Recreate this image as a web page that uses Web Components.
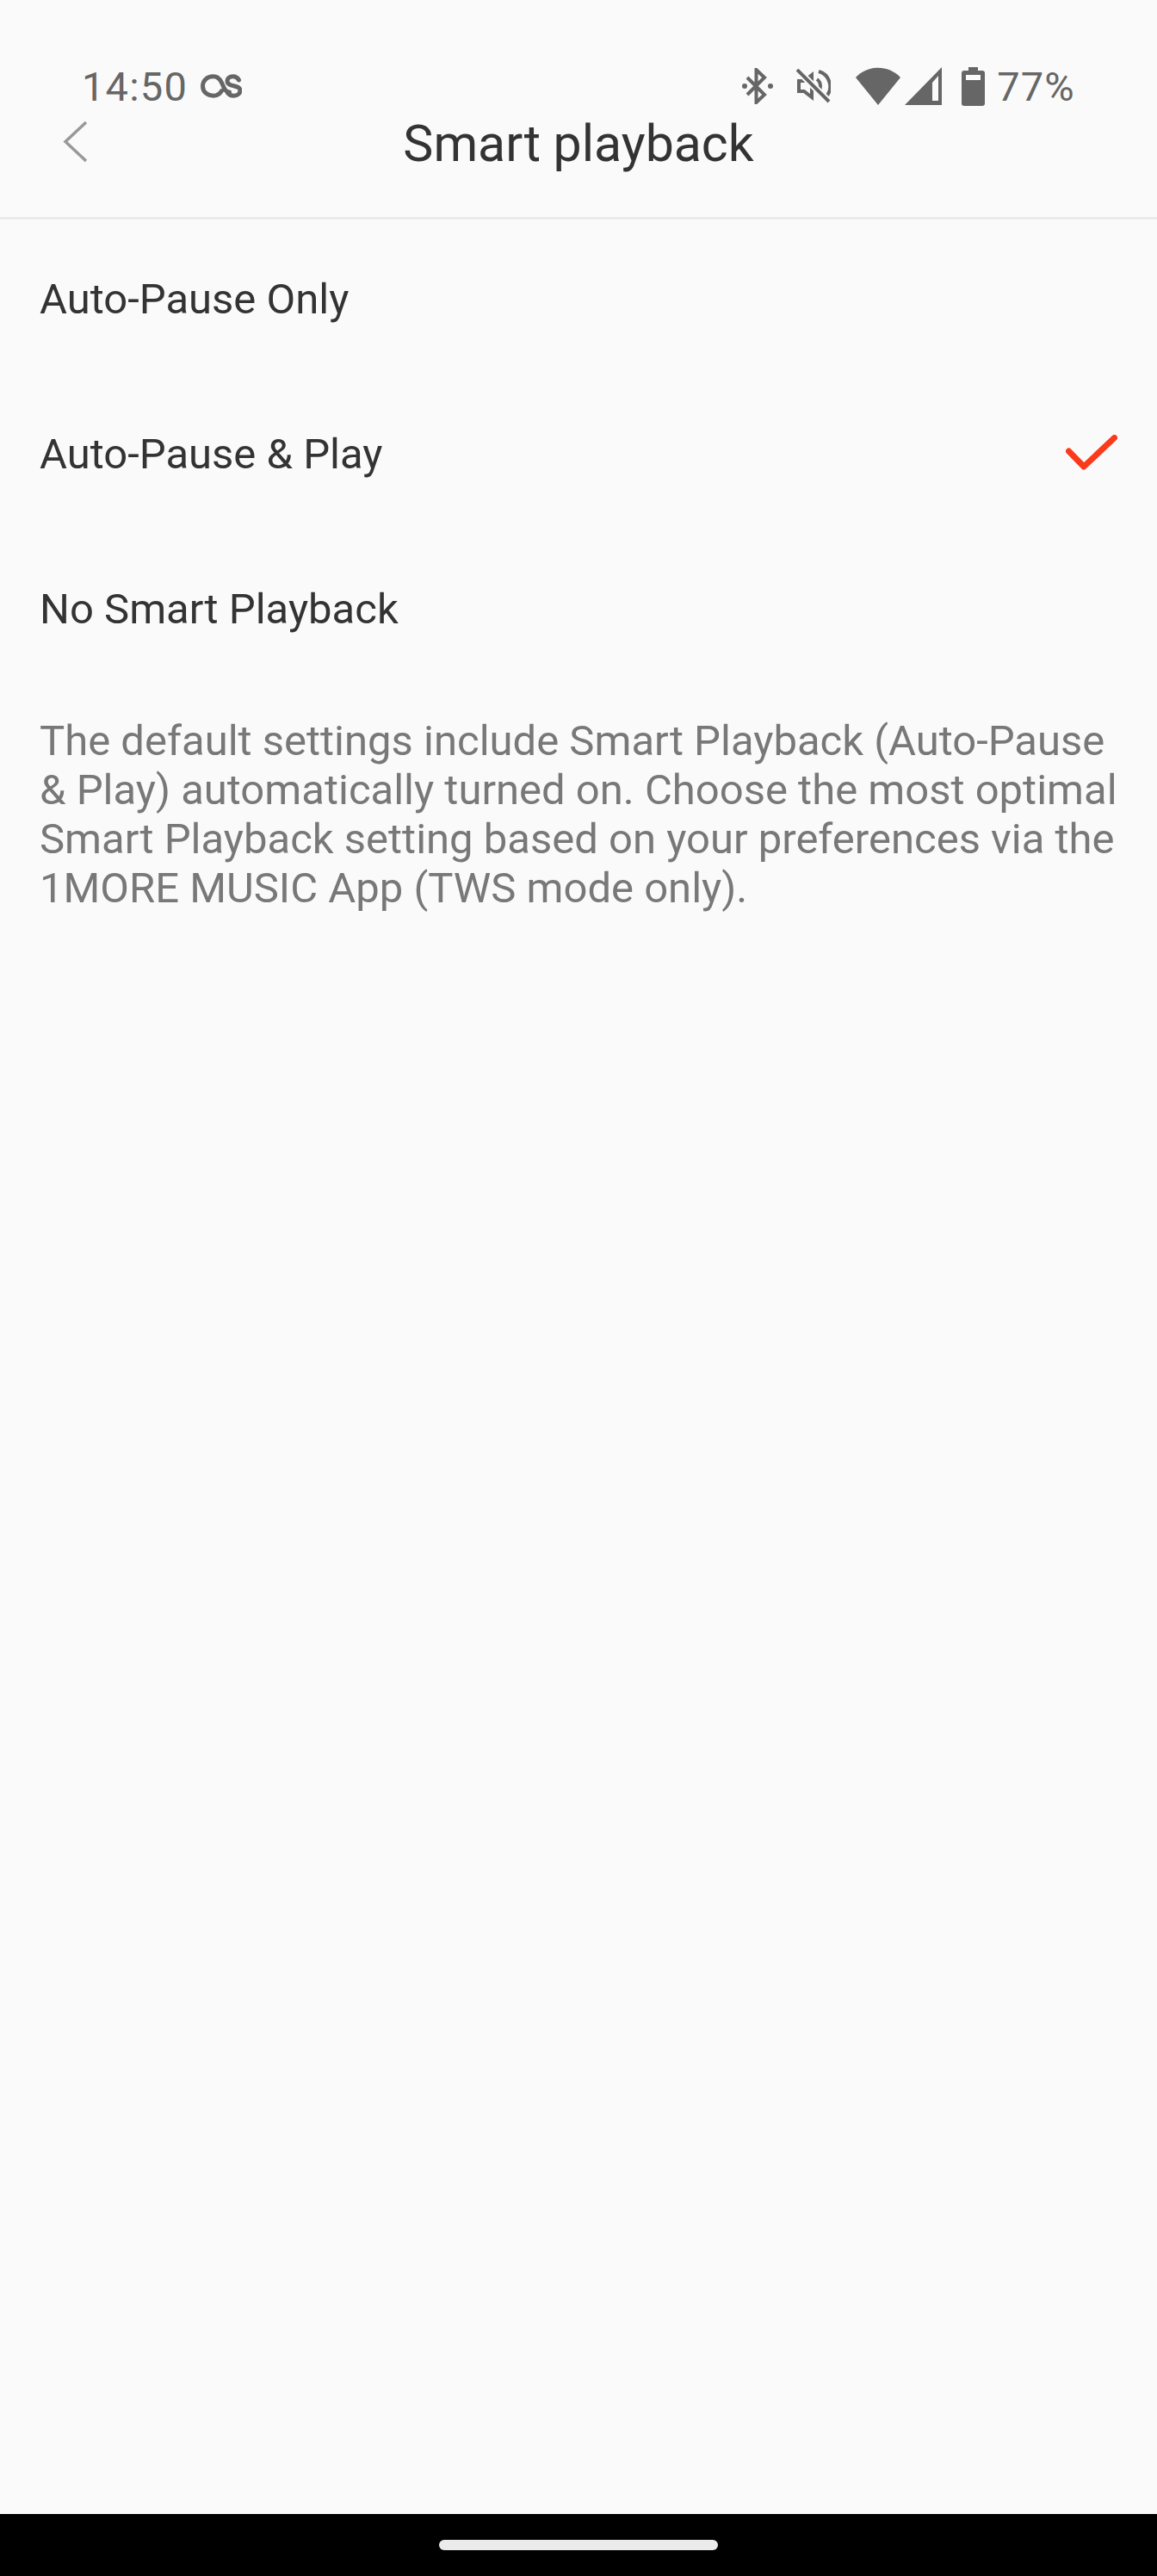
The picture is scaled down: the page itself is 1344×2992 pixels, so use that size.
<!DOCTYPE html>
<html>
<head>
<meta charset="utf-8">
<title>Smart playback</title>
<style>
html, body {
    margin: 0;
    height: 100%;
    background: #fafafa;
}
</style>
</head>
<body>
<playback-screen>
  <status-bar slot="status"></status-bar>
  <nav-header slot="header">Smart playback</nav-header>
  <option-row>Auto-Pause Only</option-row>
  <option-row selected>Auto-Pause &amp; Play</option-row>
  <option-row>No Smart Playback</option-row>
  <hint-text>The default settings include Smart Playback (Auto-Pause &amp; Play) automatically turned on. Choose the most optimal Smart Playback setting based on your preferences via the 1MORE MUSIC App (TWS mode only).</hint-text>
  <gesture-bar slot="gesture"></gesture-bar>
</playback-screen>

<script>
function define(name, html) {
  customElements.define(name, class extends HTMLElement {
    constructor() {
      super();
      this.attachShadow({ mode: "open" }).innerHTML = html;
    }
  });
}

define("playback-screen", `
<style>
:host {
    display: flex;
    flex-direction: column;
    position: relative;
    height: 2992px;
    font-family: Roboto, sans-serif;
    background: #fafafa;
}
.content {
    flex: 1;
    display: flex;
    flex-direction: column;
    padding-top: 2px;
}
</style>
<slot name="status"></slot>
<slot name="header"></slot>
<div class="content"><slot></slot></div>
<slot name="gesture"></slot>
`);

define("status-bar", `
<style>
:host {
    position: absolute;
    left: 0;
    right: 0;
    top: 68px;
    height: 64px;
    padding: 0 95px 0 95px;
    display: flex;
    align-items: center;
    color: #666;
    font-size: 47px;
    letter-spacing: 1.200px;
}
.spacer { flex: 1; }
svg { display: block; fill: #666; }
.lastfm { margin-left: 15px; }
.icons { display: flex; align-items: center; }
</style>
<span class="time">14:50</span>
<svg class="lastfm" width="48" height="28" viewBox="0 0 48 28" fill="none" style="fill:none">
  <path d="M24.500 19.500c-2 3.500-5 5.700-9.500 5.700C8 25.200 2.500 21 2.500 14S8 2.800 14.500 2.800c5 0 8 2.700 10 7.200l2.500 5.500c1.500 3.500 3.500 5.500 6.500 5.500" stroke="#666" stroke-width="5" stroke-linecap="round"/>
  <path d="M44.500 7c-1.500-2.800-4-4.200-6.800-4.200-4 0-6.700 2.200-6.700 5.400 0 7.300 15 3.800 15 10.800 0 3.500-3 6.200-7.500 6.200-3 0-5.500-1.200-7-3.200" stroke="#666" stroke-width="5" stroke-linecap="round"/>
</svg>
<span class="spacer"></span>
<div class="icons">
  <svg width="36" height="42" viewBox="0 0 36 42" style="margin-right:27px" fill="none">
    <path d="M6 11 L26 31 L16.500 40 V2 L26 11 L6 31" fill="none" stroke="#666" stroke-width="4"/>
    <circle cx="3" cy="21" r="3"/>
    <circle cx="33" cy="21" r="3"/>
  </svg>
  <svg width="40" height="40" viewBox="0 0 40 40" style="margin-right:29px">
    <path d="M3 14 H9 L18 7 V33 L9 26 H3 Z" fill="none" stroke="#666" stroke-width="4"/>
    <path d="M24 12 a10 10 0 0 1 0 16" fill="none" stroke="#666" stroke-width="4"/>
    <path d="M26 3 a18 18 0 0 1 8 30" fill="none" stroke="#666" stroke-width="4"/>
    <path d="M1 1 L38 38" stroke="#fafafa" stroke-width="8"/>
    <path d="M1 1 L38 38" stroke="#666" stroke-width="4"/>
  </svg>
  <svg width="52" height="44" viewBox="0 0 52 44" style="margin-right:5px">
    <path d="M0 12 C14 -3 38 -3 52 12 L26 44 Z"/>
  </svg>
  <svg width="44" height="44" viewBox="0 0 44 44" style="margin-right:22px">
    <path fill-rule="evenodd" d="M0 44 L43 0 V44 Z M32 18 V39 H39 V10 Z"/>
  </svg>
  <svg width="27" height="45" viewBox="0 0 27 45" style="margin-right:14px">
    <path fill-rule="evenodd" d="M8 0 H19 V4 H24 a3 3 0 0 1 3 3 V42 a3 3 0 0 1 -3 3 H3 a3 3 0 0 1 -3 -3 V7 a3 3 0 0 1 3 -3 H8 Z M5 9 V15 H22 V9 Z"/>
  </svg>
  <span>77%</span>
</div>
`);

define("nav-header", `
<style>
:host {
    display: flex;
    align-items: flex-end;
    justify-content: center;
    position: relative;
    box-sizing: border-box;
    height: 255px;
    padding-bottom: 51px;
    border-bottom: 3px solid #ebebeb;
    color: #333;
    font-size: 59px;
    line-height: 68px;
    font-weight: 400;
}
svg { position: absolute; left: 73px; top: 140px; }
</style>
<svg width="30" height="50" viewBox="0 0 30 50" fill="none">
  <path d="M27 2 L3 24.500 L27 47" stroke="#999" stroke-width="3.500"/>
</svg>
<slot></slot>
`);

customElements.define("option-row", class extends HTMLElement {
  constructor() {
    super();
    this.attachShadow({ mode: "open" }).innerHTML = `
<style>
:host {
    display: flex;
    align-items: center;
    justify-content: space-between;
    height: 180px;
    padding: 0 46px;
    color: #333;
    font-size: 49px;
}
svg { display: none; }
:host([selected]) svg { display: block; }
</style>
<slot></slot>
<svg width="60" height="44" viewBox="0 0 60 44" fill="none">
  <path d="M3.500 19 L21 37 L56.500 3.500" stroke="#fb3a1c" stroke-width="7" stroke-linecap="round" stroke-linejoin="round"/>
</svg>`;
  }
});

define("hint-text", `
<style>
:host {
    display: block;
    padding: 35px 46px 0;
    color: #787878;
    font-size: 49px;
    line-height: 57px;
}
</style>
<slot></slot>
`);

define("gesture-bar", `
<style>
:host {
    display: flex;
    align-items: flex-start;
    justify-content: center;
    height: 72px;
    background: #000;
}
div {
    width: 324px;
    height: 12px;
    margin-top: 30px;
    border-radius: 6px;
    background: #ebebeb;
}
</style>
<div></div>
`);
</script>
</body>
</html>
